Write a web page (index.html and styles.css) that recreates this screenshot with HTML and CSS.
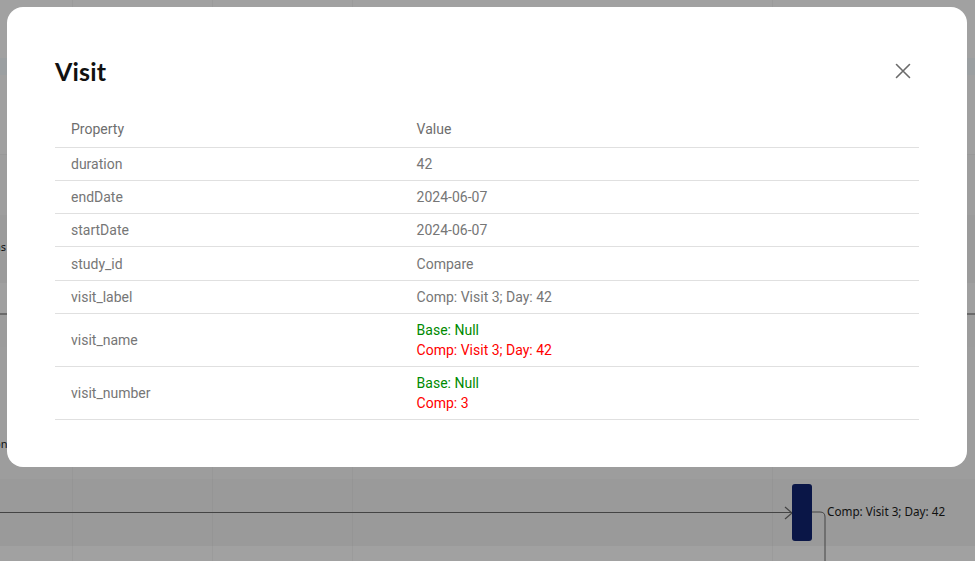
FILE: index.html
```html
<!DOCTYPE html>
<html>
<head>
<meta charset="utf-8">
<link rel="stylesheet" href="styles.css">
</head>
<body>
<div class="canvas">
  <div class="band b1"></div>
  <div class="band b2"></div>
  <div class="band b3"></div>
  <div class="band b4"></div>
  <div class="band b5"><span class="frag frag-s">ns</span></div>
  <div class="band b6"></div>
  <div class="band b7"></div>
  <div class="band b8"><span class="frag frag-on">on</span></div>
  <div class="band b9"></div>
  <div class="band b10"></div>
  <div class="vline v1"></div>
  <div class="vline v2"></div>
  <div class="vline v3"></div>
  <div class="vline v4"></div>
  <div class="edge"></div>
  <svg class="arrow" width="12" height="14" viewBox="0 0 12 14"><path d="M2 1 L9 7 L2 13" fill="none" stroke="#444" stroke-width="1.2"/></svg>
  <div class="node"></div>
  <svg class="connector" width="20" height="60" viewBox="0 0 20 60"><path d="M0 1 H8 Q13 1 13 6 V60" fill="none" stroke="#444" stroke-width="1"/></svg>
  <span class="node-label">Comp: Visit 3; Day: 42</span>
</div>

<div class="modal">
  <div class="modal-head">
    <h2 class="modal-title">Visit</h2>
    <button class="close" aria-label="Close">
      <svg width="16" height="16" viewBox="0 0 16 16"><path d="M1.5 1.5 L14.5 14.5 M14.5 1.5 L1.5 14.5" stroke="#6b6b6b" stroke-width="1.6" stroke-linecap="round"/></svg>
    </button>
  </div>
  <table class="props">
    <thead>
      <tr><th class="c-prop">Property</th><th>Value</th></tr>
    </thead>
    <tbody>
      <tr><td>duration</td><td>42</td></tr>
      <tr><td>endDate</td><td>2024-06-07</td></tr>
      <tr><td>startDate</td><td>2024-06-07</td></tr>
      <tr><td>study_id</td><td>Compare</td></tr>
      <tr><td>visit_label</td><td>Comp: Visit 3; Day: 42</td></tr>
      <tr><td>visit_name</td><td><div class="base">Base: Null</div><div class="comp">Comp: Visit 3; Day: 42</div></td></tr>
      <tr><td>visit_number</td><td><div class="base">Base: Null</div><div class="comp">Comp: 3</div></td></tr>
    </tbody>
  </table>
</div>
</body>
</html>
```
FILE: styles.css
```css
* { box-sizing: border-box; }
html, body { margin: 0; padding: 0; }
body {
  width: 975px;
  height: 561px;
  overflow: hidden;
  background: #a0a0a0;
  font-family: Roboto, "Liberation Sans", sans-serif;
  position: relative;
}
.canvas {
  position: relative;
  width: 975px;
  height: 561px;
  display: flex;
  flex-direction: column;
}
.band { width: 100%; position: relative; }
.b1 { height: 58px; background: #a1a1a1; }
.b2 { height: 17px; background: #9b9fa1; }
.b3 { height: 80px; background: #a0a0a0; border-bottom: 1px solid #999; }
.b4 { height: 60px; background: #9e9e9e; }
.b5 { height: 68px; background: #9b9b9b; }
.b6 { height: 32px; background: #a0a0a0; border-bottom: 2px solid #6a6a6a; }
.b7 { height: 32px; background: #9c9c9c; }
.b8 { height: 132px; background: #9d9d9d; }
.b9 { height: 67px; background: #9a9a9a; }
.b10 { flex: 1; background: #a1a1a1; }
.frag {
  position: absolute;
  font-family: "Noto Sans", sans-serif;
  font-size: 11px;
  line-height: 16px;
  color: #111;
}
.frag-s { top: 24px; left: -6px; }
.frag-on { top: 89px; left: -6px; }
.vline { position: absolute; top: 0; bottom: 0; width: 1px; background: rgba(0,0,0,0.03); }
.v1 { left: 72px; }
.v2 { left: 212px; }
.v3 { left: 352px; }
.v4 { left: 772px; }
.edge {
  position: absolute;
  left: 0;
  top: 512px;
  width: 792px;
  height: 1px;
  background: #444;
}
.arrow { position: absolute; left: 783px; top: 506px; }
.node {
  position: absolute;
  left: 792px;
  top: 484px;
  width: 20px;
  height: 57px;
  background: #0a1647;
  border-radius: 3px;
}
.connector { position: absolute; left: 812px; top: 511px; }
.node-label {
  position: absolute;
  left: 827px;
  top: 503px;
  font-family: "Noto Sans", sans-serif;
  font-size: 11.7px;
  color: #111;
}

.modal {
  position: absolute;
  left: 7px;
  top: 7px;
  width: 960px;
  height: 460px;
  background: #fff;
  border-radius: 16px;
  padding: 48px 48px 0 48px;
}
.modal-head {
  display: flex;
  align-items: center;
  justify-content: space-between;
  height: 32px;
}
.modal-title {
  margin: 0;
  font-family: Lato, "Noto Sans", sans-serif;
  font-weight: 700;
  font-size: 25px;
  color: #111;
  letter-spacing: 0.2px;
}
.close {
  border: 0;
  background: transparent;
  padding: 0;
  margin-right: 8px;
  width: 16px;
  height: 16px;
  display: flex;
}
.props {
  margin-top: 24px;
  width: 864px;
  border-collapse: collapse;
  font-size: 14px;
  color: #767676;
}
.props th, .props td {
  text-align: left;
  padding: 6.08px 16px;
  line-height: 20px;
  border-bottom: 1px solid #e0e0e0;
  font-weight: 400;
  vertical-align: middle;
}
.props th { padding-top: 8px; padding-bottom: 8px; color: #6e6e6e; }
.c-prop { width: 40%; }
.base { color: #008a00; }
.comp { color: #ff0000; }
```
